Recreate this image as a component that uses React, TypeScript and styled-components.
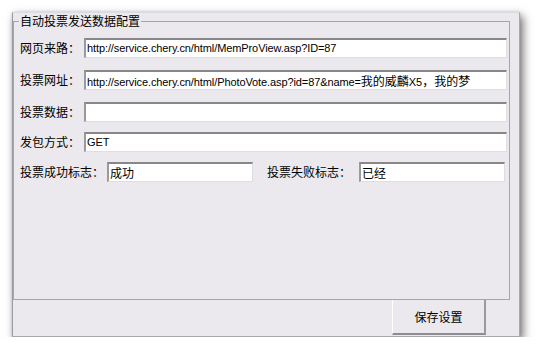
import React from 'react';
import styled, { createGlobalStyle } from 'styled-components';

const GlobalStyle = createGlobalStyle`
  html, body {
    margin: 0;
    padding: 0;
    background: #ffffff;
  }
  body {
    font-family: "Noto Sans CJK SC", "Liberation Sans", sans-serif;
    font-size: 12px;
    color: #000;
  }
`;

const Window = styled.div`
  margin: 12px 0 0 12px;
  width: 508px;
  height: 325px;
  box-sizing: border-box;
  background: #ebe9ed;
  border: 1px solid #a9a8ad;
  border-top-color: #dcdbe0;
  border-left-color: #9c9ba0;
  box-shadow: 3px 4px 9px rgba(0, 0, 0, 0.55), 0 0 3px rgba(0, 0, 0, 0.12);
  display: flex;
  flex-direction: column;
`;

const GroupBox = styled.fieldset`
  margin: 1px 9px 0 0;
  padding: 0 2px 0 6px;
  height: 286px;
  box-sizing: border-box;
  border: 1px solid #a6a5aa;
  min-width: 0;
`;

const Legend = styled.legend`
  padding: 0 1px;
  margin-left: -1px;
  font-size: 12px;
  line-height: 14px;
  color: #000;
`;

const Row = styled.div<{ $top: number }>`
  display: flex;
  align-items: center;
  height: 20px;
  margin-top: ${({ $top }) => $top}px;
`;

const Label = styled.span<{ $width: number; $indent?: number }>`
  flex: none;
  width: ${({ $width }) => $width}px;
  margin-left: ${({ $indent }) => $indent ?? 0}px;
  line-height: 20px;
  white-space: nowrap;
  font-size: 12px;
`;

const TextBox = styled.div<{ $width?: number }>`
  box-sizing: border-box;
  height: 20px;
  ${({ $width }) => ($width ? `width: ${$width}px; flex: none;` : 'flex: 1;')}
  background: #ffffff;
  border-style: solid;
  border-width: 2px 1px 1px 2px;
  border-color: #878689 #dedde2 #dedde2 #9a999d;
  padding: 0 2px 0 1px;
  font-family: "Liberation Sans", "Noto Sans CJK SC", sans-serif;
  font-size: 11px;
  letter-spacing: -0.1px;
  line-height: 17px;
  white-space: nowrap;
  overflow: hidden;
`;

const Cjk = styled.span`
  font-family: "Noto Sans CJK SC", sans-serif;
  font-size: 12px;
  letter-spacing: 0;
`;

const Footer = styled.div`
  flex: 1;
  display: flex;
  justify-content: flex-end;
  align-items: stretch;
  padding: 0 33px 1px 0;
`;

const SaveButton = styled.button`
  box-sizing: border-box;
  width: 94px;
  margin: 0;
  padding: 0;
  background: #ebe9ed;
  border-style: solid;
  border-width: 0 2px 2px 1px;
  border-color: #ebe9ed #9a999d #8d8c90 #ffffff;
  font-family: "Noto Sans CJK SC", sans-serif;
  font-size: 12px;
  color: #000;
  cursor: pointer;
`;

export default function App() {
  return (
    <>
      <GlobalStyle />
      <Window>
        <GroupBox>
          <Legend>自动投票发送数据配置</Legend>
          <Row $top={10}>
            <Label $width={64}>网页来路：</Label>
            <TextBox>http://service.chery.cn/html/MemProView.asp?ID=87</TextBox>
          </Row>
          <Row $top={12}>
            <Label $width={64}>投票网址：</Label>
            <TextBox>
              http://service.chery.cn/html/PhotoVote.asp?id=87&amp;name=<Cjk>我的威麟</Cjk>X5<Cjk>，我的梦</Cjk>
            </TextBox>
          </Row>
          <Row $top={12}>
            <Label $width={64}>投票数据：</Label>
            <TextBox />
          </Row>
          <Row $top={10}>
            <Label $width={64}>发包方式：</Label>
            <TextBox>GET</TextBox>
          </Row>
          <Row $top={10}>
            <Label $width={87}>投票成功标志：</Label>
            <TextBox $width={146}>
              <Cjk>成功</Cjk>
            </TextBox>
            <Label $width={92} $indent={14}>
              投票失败标志：
            </Label>
            <TextBox $width={146}>
              <Cjk>已经</Cjk>
            </TextBox>
          </Row>
        </GroupBox>
        <Footer>
          <SaveButton>保存设置</SaveButton>
        </Footer>
      </Window>
    </>
  );
}
